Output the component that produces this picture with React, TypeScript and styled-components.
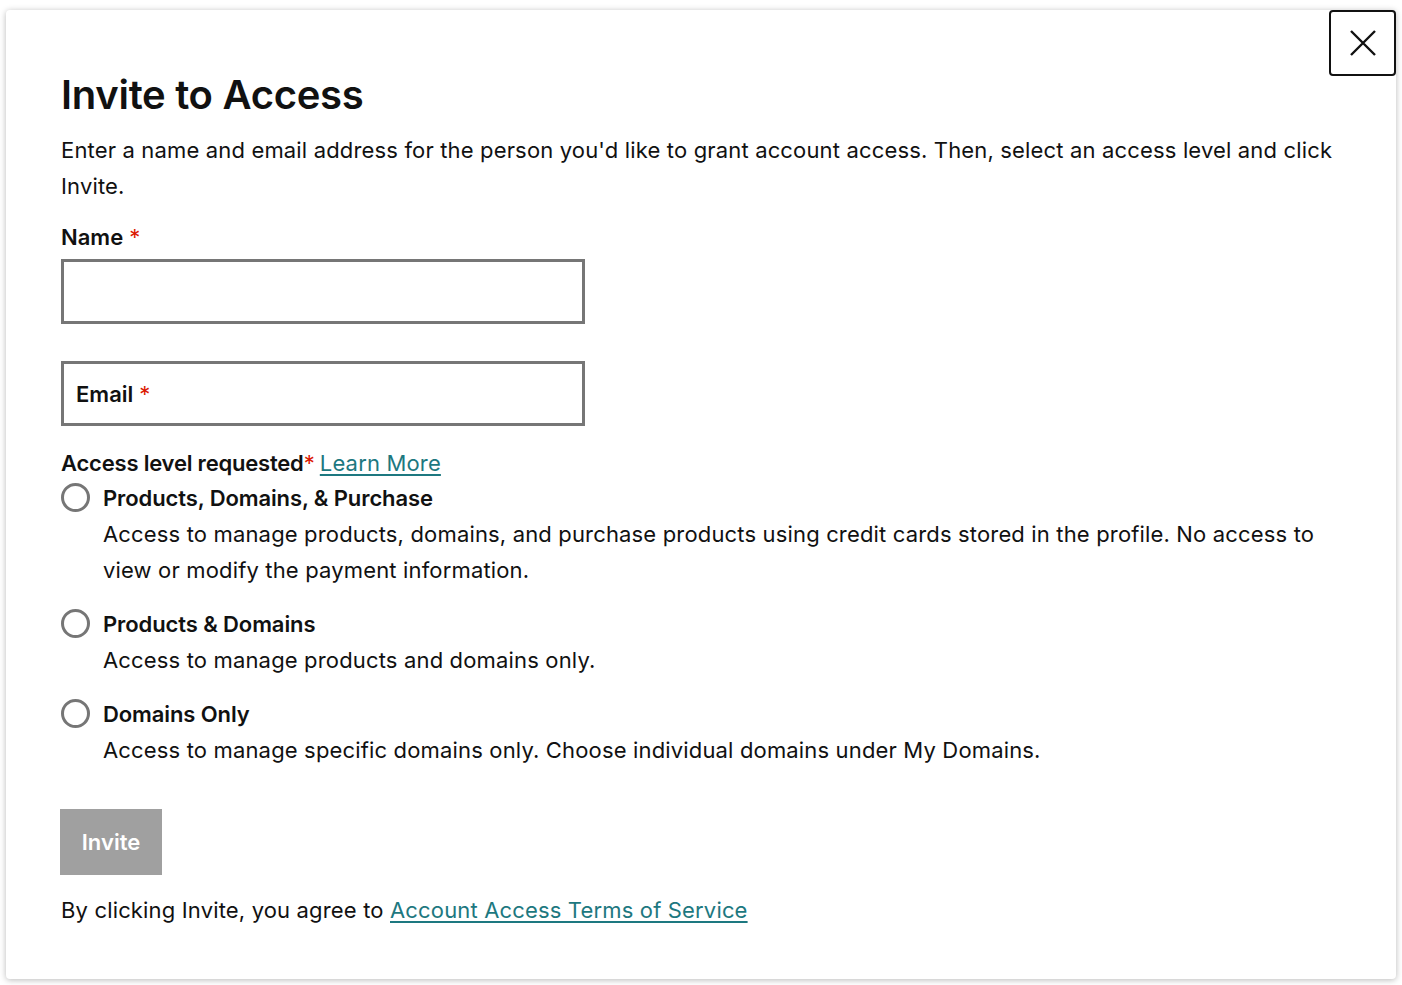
import React from "react";
import styled, { createGlobalStyle } from "styled-components";

const GlobalStyle = createGlobalStyle`
  * { box-sizing: border-box; }
  html, body { margin: 0; padding: 0; background: #ffffff; }
  body {
    font-family: Inter, "Noto Sans", "Liberation Sans", sans-serif;
    color: #111111;
    -webkit-font-smoothing: antialiased;
  }
`;

const Page = styled.div`
  width: 1402px;
  height: 985px;
  padding: 10px 6px 6px 6px;
`;

const Panel = styled.div`
  position: relative;
  height: 969px;
  background: #ffffff;
  border-radius: 4px;
  box-shadow: 0 1px 6px rgba(0, 0, 0, 0.28);
  padding: 59px 55px 0 55px;
`;

const CloseButton = styled.button`
  position: absolute;
  top: 0;
  right: 0;
  width: 67px;
  height: 66px;
  border: 2px solid #111111;
  border-radius: 4px;
  background: #ffffff;
  display: flex;
  align-items: center;
  justify-content: center;
  padding: 0;
  cursor: pointer;
`;

const Title = styled.h1`
  margin: 0;
  font-size: 40px;
  line-height: 52px;
  font-weight: 600;
  letter-spacing: -0.3px;
`;

const Intro = styled.p`
  margin: 11px 0 0 0;
  font-size: 22px;
  line-height: 36px;
  font-weight: 400;
  letter-spacing: 0.16px;
`;

const FieldLabel = styled.label`
  display: block;
  margin-top: 18px;
  font-size: 22px;
  line-height: 30px;
  font-weight: 600;
`;

const Req = styled.span`
  color: #db1802;
  margin-left: 6px;
  font-weight: 400;
`;

const ReqTight = styled(Req)`
  margin-left: 0;
`;

const InputBox = styled.div<{ $mt: number }>`
  position: relative;
  width: 524px;
  height: 65px;
  margin-top: ${(p) => p.$mt}px;
  border: 3px solid #767676;
  background: #ffffff;
  display: flex;
  align-items: center;
  padding: 0 12px;
`;

const FloatLabel = styled.span`
  font-size: 22px;
  font-weight: 600;
  line-height: 30px;
`;

const Group = styled.div`
  margin-top: 20px;
`;

const GroupLabel = styled.div`
  font-size: 22px;
  line-height: 34px;
  font-weight: 600;
  letter-spacing: -0.2px;
`;

const Link = styled.a`
  color: #1d7880;
  text-decoration: underline;
  text-underline-offset: 3px;
  font-weight: 400;
  letter-spacing: 0.16px;
`;

const Option = styled.div<{ $mt: number }>`
  display: grid;
  grid-template-columns: 28px 1fr;
  column-gap: 14px;
  margin-top: ${(p) => p.$mt}px;
`;

const Radio = styled.span`
  width: 29px;
  height: 29px;
  border-radius: 50%;
  border: 3px solid #767676;
  margin-top: 2px;
`;

const OptionTitle = styled.div`
  font-size: 22px;
  line-height: 34px;
  font-weight: 600;
  letter-spacing: -0.1px;
`;

const OptionDesc = styled.div`
  grid-column: 2;
  font-size: 22px;
  line-height: 36px;
  margin-top: 1px;
  letter-spacing: 0.16px;
`;

const InviteButton = styled.button`
  display: block;
  margin-top: 41px;
  width: 102px;
  height: 66px;
  border: none;
  background: #a0a0a0;
  color: #ffffff;
  font-family: inherit;
  font-size: 22px;
  font-weight: 600;
  padding: 0;
  margin-left: -1px;
`;

const Footer = styled.p`
  margin: 17px 0 0 0;
  font-size: 22px;
  line-height: 36px;
  letter-spacing: 0.16px;
`;

const options = [
  {
    title: "Products, Domains, & Purchase",
    desc: "Access to manage products, domains, and purchase products using credit cards stored in the profile. No access to view or modify the payment information.",
    mt: 1,
  },
  {
    title: "Products & Domains",
    desc: "Access to manage products and domains only.",
    mt: 19,
  },
  {
    title: "Domains Only",
    desc: "Access to manage specific domains only. Choose individual domains under My Domains.",
    mt: 19,
  },
];

export default function App() {
  return (
    <>
      <GlobalStyle />
      <Page>
        <Panel>
          <CloseButton aria-label="Close">
            <svg width="26" height="26" viewBox="0 0 26 26">
              <path d="M1 1 L25 25 M25 1 L1 25" stroke="#111" strokeWidth="2.4" fill="none" />
            </svg>
          </CloseButton>
          <Title>Invite to Access</Title>
          <Intro>
            Enter a name and email address for the person you'd like to grant account access. Then, select an access level and click Invite.
          </Intro>
          <FieldLabel>
            Name<Req>*</Req>
          </FieldLabel>
          <InputBox $mt={7} />
          <InputBox $mt={37}>
            <FloatLabel>
              Email<Req>*</Req>
            </FloatLabel>
          </InputBox>
          <Group>
            <GroupLabel>
              Access level requested<ReqTight>*</ReqTight> <Link href="#">Learn More</Link>
            </GroupLabel>
            {options.map((o) => (
              <Option key={o.title} $mt={o.mt}>
                <Radio />
                <OptionTitle>{o.title}</OptionTitle>
                <OptionDesc>{o.desc}</OptionDesc>
              </Option>
            ))}
          </Group>
          <InviteButton>Invite</InviteButton>
          <Footer>
            By clicking Invite, you agree to <Link href="#">Account Access Terms of Service</Link>
          </Footer>
        </Panel>
      </Page>
    </>
  );
}
